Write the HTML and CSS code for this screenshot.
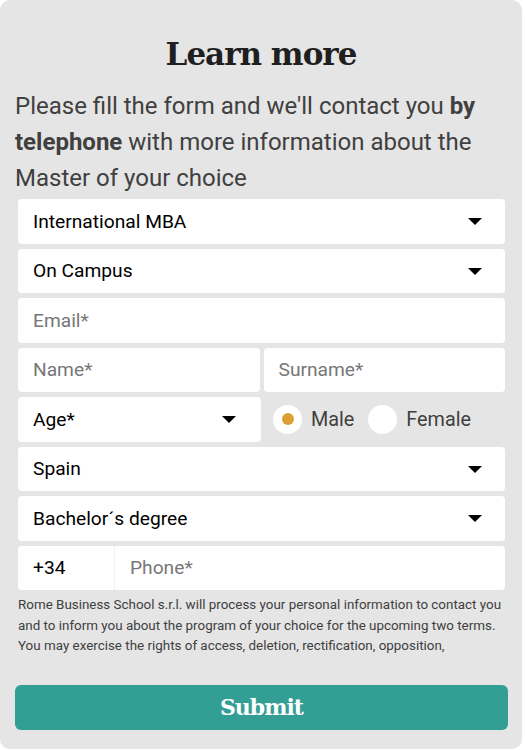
FILE: index.html
```html
<!DOCTYPE html>
<html lang="en">
<head>
<meta charset="utf-8">
<link rel="stylesheet" href="styles.css">
</head>
<body>
<div class="panel">
  <h1 class="title">Learn more</h1>
  <p class="intro">Please fill the form and we'll contact you <b>by telephone</b> with more information about the Master of your choice</p>
  <form class="form">
    <div class="field select"><span class="val">International MBA</span><span class="caret"></span></div>
    <div class="field select"><span class="val">On Campus</span><span class="caret"></span></div>
    <div class="field"><span class="ph">Email*</span></div>
    <div class="row two">
      <div class="field"><span class="ph">Name*</span></div>
      <div class="field"><span class="ph">Surname*</span></div>
    </div>
    <div class="row age-row">
      <div class="field select age"><span class="val">Age*</span><span class="caret"></span></div>
      <div class="radios">
        <label class="radio"><span class="circle checked"></span>Male</label>
        <label class="radio"><span class="circle"></span>Female</label>
      </div>
    </div>
    <div class="field select"><span class="val">Spain</span><span class="caret"></span></div>
    <div class="field select"><span class="val">Bachelor´s degree</span><span class="caret"></span></div>
    <div class="field phone">
      <span class="prefix">+34</span>
      <span class="ph">Phone*</span>
    </div>
    <p class="legal">Rome Business School s.r.l. will process your personal information to contact you and to inform you about the program of your choice for the upcoming two terms. You may exercise the rights of access, deletion, rectification, opposition,</p>
    <button type="button" class="submit">Submit</button>
  </form>
</div>
</body>
</html>
```
FILE: styles.css
```css
html, body {
  margin: 0;
  padding: 0;
  background: #ffffff;
}
.panel {
  width: 522px;
  height: 749px;
  box-sizing: border-box;
  background: #e5e5e5;
  border-radius: 10px;
  padding: 30px 0 0 0;
  font-family: Roboto, "Liberation Sans", sans-serif;
  overflow: hidden;
}
.title {
  margin: 0;
  text-align: center;
  font-family: "DejaVu Serif", serif;
  font-weight: bold;
  font-size: 31px;
  line-height: 48px;
  color: #1f1f1f;
  letter-spacing: -1px;
}
.intro {
  margin: 10px 0 0 15px;
  padding-right: 4px;
  font-size: 24px;
  line-height: 36px;
  color: #404040;
}
.intro b {
  font-weight: bold;
}
.form {
  margin: 0 17px 0 18px;
  padding-top: 3px;
  display: flex;
  flex-direction: column;
  gap: 5px;
}
.field {
  height: 44.5px;
  background: #ffffff;
  border-radius: 4px;
  display: flex;
  align-items: center;
  padding: 0 23px 0 15px;
  box-sizing: border-box;
  font-size: 19.2px;
  color: #000;
}
.select .val {
  flex: 1;
}
.caret {
  width: 0;
  height: 0;
  border-left: 7px solid transparent;
  border-right: 7px solid transparent;
  border-top: 7px solid #000;
  margin-top: 1px;
}
.ph {
  color: #777777;
}
.row {
  display: flex;
}
.two {
  gap: 4px;
}
.two .field {
  flex: 1;
}
.age-row {
  align-items: center;
}
.age {
  width: 243px;
  padding-right: 25px;
}
.radios {
  display: flex;
  align-items: center;
  margin-left: 12px;
  gap: 14px;
}
.radio {
  display: flex;
  align-items: center;
  font-size: 19.8px;
  color: #404040;
  gap: 9px;
}
.circle {
  width: 29px;
  height: 29px;
  border-radius: 50%;
  background: #fff;
  display: flex;
  align-items: center;
  justify-content: center;
}
.circle.checked::after {
  content: "";
  width: 12px;
  height: 12px;
  border-radius: 50%;
  background: #dca032;
}
.phone {
  padding: 0;
}
.prefix {
  width: 97px;
  height: 100%;
  box-sizing: border-box;
  padding-left: 15px;
  display: flex;
  align-items: center;
  border-right: 1px solid #f2f2f2;
}
.phone .ph {
  padding-left: 15px;
}
.legal {
  margin: 0 -6px 0 0;
  font-size: 13.4px;
  line-height: 20.5px;
  color: #404040;
  letter-spacing: 0;
}
.submit {
  margin: 23px -3px 0 -3px;
  height: 45px;
  border: none;
  border-radius: 6px;
  background: #339e94;
  color: #ffffff;
  font-family: "DejaVu Serif", serif;
  font-weight: bold;
  font-size: 22px;
  letter-spacing: -1px;
  cursor: pointer;
}
```
